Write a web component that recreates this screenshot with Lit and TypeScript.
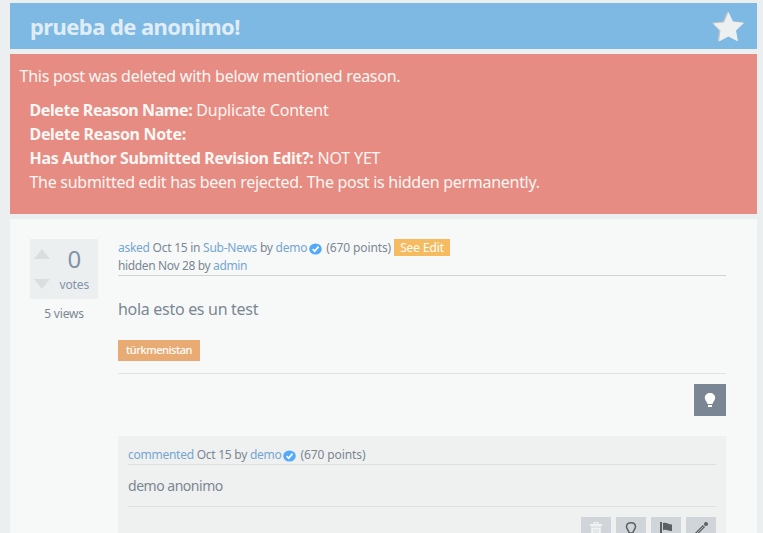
import { LitElement, html, css, svg } from "lit";
import { customElement } from "lit/decorators.js";

const bulbPath = "M8 1C5 1 2.800 3.100 2.800 5.800c0 2.500 2.200 3.900 2.700 6.200h5c.500-2.300 2.700-3.700 2.700-6.200C13.200 3.100 11 1 8 1z";

const verified = html`<svg class="verified" viewBox="0 0 13 12">
  <ellipse cx="6.500" cy="6" rx="6.300" ry="5.600" fill="#54aaf8" />
  <path d="M3.700 6.200 5.700 8.200 9.500 3.600" fill="none" stroke="#fff" stroke-width="1.700" />
</svg>`;

const icons = {
  trash: svg`<path fill="#f1f3f3" d="M2 3h3.500V1h5v2H14v2.500H2zM3 6.500h10l-.500 9.500H3.500z"/><path stroke="#cfd5d8" stroke-width=".8" d="M6 8v7M8 8v7M10 8v7"/><path fill="#cfd5d8" d="M7 2h2v1H7z"/>`,
  bulb: svg`<path d="M8 1.700C5.100 1.700 3.500 3.500 3.500 5.800c0 2.400 2.200 3.200 2.700 6.200h3.600c.500-3 2.700-3.800 2.700-6.200 0-2.300-1.600-4.100-4.500-4.100z" fill="none" stroke="#5b6062" stroke-width="1.500"/><path fill="#5b6062" d="M6 13h4v2H6z"/>`,
  flag: svg`<path fill="#5b6062" d="M2 1h2v15H2zM5 2c3.500-1 5 1.500 9 1.500V10c-4 .500-5.500-2-9-.800z"/>`,
  wand: svg`<path d="M2 14 11 5" stroke="#5b6062" stroke-width="3"/><path d="M3 13 10.500 5.500" stroke="#b0b7ba" stroke-width="1"/><circle cx="13" cy="3" r="2" fill="#5b6062"/>`,
};

@customElement("app-root")
export class AppRoot extends LitElement {
  static styles = css`
    :host {
      display: block;
      height: 533px;
      overflow: hidden;
      box-sizing: border-box;
      padding: 3px 6px 0 10px;
      background: #ebeff0;
      color: #7b8794;
      font-family: "Noto Sans", "Open Sans", sans-serif;
      font-size: 12px;
      line-height: 18px;
      letter-spacing: -0.26px;
    }
    * { box-sizing: border-box; }
    svg { display: block; }
    .title {
      display: flex;
      align-items: center;
      justify-content: space-between;
      height: 46px;
      padding: 2px 12px 0 20px;
      background: #7db9e2;
      color: #e0edf6;
    }
    h1 {
      margin: -2px 0 0;
      font-size: 22px;
      line-height: 46px;
      letter-spacing: -0.58px;
    }
    .star { width: 33px; height: 32px; }
    .notice {
      height: 160px;
      margin: 5px 0;
      padding: 10px 9px;
      background: #e78c82;
      color: #fbf7f5;
      font-size: 16px;
      line-height: 24px;
      white-space: nowrap;
    }
    .intro { margin-left: 0.5px; letter-spacing: -0.26px; }
    .details { margin: 10px 0 0 10.500px; letter-spacing: -0.28px; }
    .details b { letter-spacing: -0.32px; }
    .details .name { letter-spacing: -0.42px; }
    .details .loose { letter-spacing: -0.18px; }
    .post {
      display: flex;
      gap: 20px;
      height: 330px;
      padding: 20px 31px 0 20px;
      background: #f7f9f8;
    }
    .side { width: 68px; text-align: center; }
    .votes {
      display: flex;
      height: 60px;
      padding: 10px 9px 0 4px;
      background: #ebeff0;
      color: #8393a8;
      justify-content: space-between;
    }
    .arrows { width: 16px; height: 41px; }
    .count { font-size: 24px; line-height: 20px; letter-spacing: 0; }
    .label { line-height: 18px; margin-top: 7px; letter-spacing: -0.15px; }
    .views { margin-top: 6px; letter-spacing: -0.2px; }
    .main { flex: 1; min-width: 0; }
    .meta { height: 37px; border-bottom: 1px solid #cfd3d4; white-space: nowrap; }
    .line { display: flex; align-items: center; height: 18px; white-space: pre; }
    .hidden { letter-spacing: -0.36px; }
    a { color: #74a6d1; }
    .verified { width: 13px; height: 12px; margin: 1px 4.500px 0 1.500px; }
    .points { letter-spacing: -0.1px; }
    .edit {
      width: 56px;
      height: 17px;
      margin: 0 0 1px 3px;
      line-height: 17px;
      text-align: center;
      letter-spacing: -0.1px;
      background: #f6bb5e;
      color: #fff;
    }
    .content { margin-top: 21px; font-size: 16px; line-height: 24px; letter-spacing: -0.3px; }
    .tag {
      width: 82px;
      height: 21px;
      margin-top: 19px;
      background: #e8ab73;
      color: #fff;
      font-size: 11px;
      font-weight: 500;
      line-height: 20px;
      text-align: center;
      letter-spacing: -0.44px;
    }
    .actions {
      display: flex;
      justify-content: flex-end;
      margin-top: 12px;
      padding-top: 10px;
      border-top: 1px solid #e1e4e4;
    }
    .answer { width: 32px; height: 32px; padding: 8px; background: #7a8693; }
    .comment { height: 120px; margin-top: 20px; padding: 10px 10px 0; background: #eff0f0; }
    .comment .meta { height: 19px; border-color: #dddfe0; }
    .text { height: 41px; padding-top: 9px; font-size: 14px; line-height: 23px; letter-spacing: -0.48px; }
    .tools {
      display: flex;
      justify-content: flex-end;
      gap: 5px;
      padding-top: 10px;
      border-top: 1px solid #dddfe0;
    }
    .tool { width: 30px; height: 30px; padding: 4px 7px; background: #cfd5d8; }
    .tool svg { width: 16px; height: 16px; }
  `;

  render() {
    return html`
      <header class="title">
        <h1>prueba de anonimo!</h1>
        <svg class="star" viewBox="0 0 33 32">
          <path fill="#bfc5c8" d="M15.500 0 20.500 10.500 31.500 11 23.500 19 25.500 30 15.500 25 5.500 30.500 7 19.500 0 11.500 11 10.500z" />
          <path fill="#ecf0f1" d="M16.500 1 21 10.500 32 12 24 19.500 26 30.500 16.500 25.500 7 30.500 8.500 19.500 1 12.500 12 11.500z" />
        </svg>
      </header>
      <section class="notice">
        <div class="intro">This post was deleted with below mentioned reason.</div>
        <div class="details">
          <div class="loose"><b class="name">Delete Reason Name:</b> Duplicate Content</div>
          <div><b>Delete Reason Note:</b></div>
          <div class="loose"><b>Has Author Submitted Revision Edit?:</b> NOT YET</div>
          <div>The submitted edit has been rejected. The post is hidden permanently.</div>
        </div>
      </section>
      <article class="post">
        <aside class="side">
          <div class="votes">
            <svg class="arrows" viewBox="0 0 16 41">
              <path fill="#dadedf" d="M0 10 8 0l8 10zM0 30h16L8 40z" />
            </svg>
            <div>
              <div class="count">0</div>
              <div class="label">votes</div>
            </div>
          </div>
          <div class="views">5 views</div>
        </aside>
        <main class="main">
          <div class="meta">
            <div class="line"><span><a>asked</a> Oct 15 in <a>Sub-News</a> by <a>demo</a></span>${verified}<span class="points">(670 points)</span><span class="edit">See Edit</span></div>
            <div class="line hidden"><span>hidden Nov 28 by <a>admin</a></span></div>
          </div>
          <div class="content">hola esto es un test</div>
          <div class="tag">türkmenistan</div>
          <div class="actions">
            <div class="answer">
              <svg viewBox="0 0 16 16"><path fill="#fff" d=${bulbPath} /><path fill="#fff" d="M6 13h4v2H6z" /></svg>
            </div>
          </div>
          <section class="comment">
            <div class="meta">
              <div class="line"><span><a>commented</a> Oct 15 by <a>demo</a></span>${verified}<span class="points">(670 points)</span></div>
            </div>
            <div class="text">demo anonimo</div>
            <div class="tools">
              ${Object.values(icons).map((icon) => html`<div class="tool"><svg viewBox="0 0 16 16">${icon}</svg></div>`)}
            </div>
          </section>
        </main>
      </article>
    `;
  }
}
